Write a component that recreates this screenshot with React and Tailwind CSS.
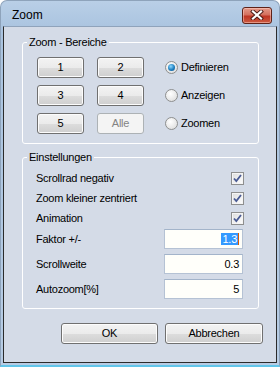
import React from 'react'

const btn = 'flex items-center justify-center h-[21px] rounded-[3px] border border-[#707070] bg-[linear-gradient(to_bottom,#f3f3f3_0%,#ebebeb_50%,#dddddd_51%,#cfcfcf_100%)] shadow-[inset_0_0_0_1px_#fcfcfc] text-black'

function WinButton({ children, w = 'w-[47px]', disabled }) {
  if (disabled) {
    return (
      <div className={`flex items-center justify-center h-[21px] ${w} rounded-[3px] border border-[#adb2b5] bg-[#f4f4f4] text-[#838383]`}>
        {children}
      </div>
    )
  }
  return <div className={`${btn} ${w}`}>{children}</div>
}

function Radio({ checked, label }) {
  return (
    <div className="flex items-center gap-[3px] ml-[8px]">
      <span className="flex items-center justify-center w-[13px] h-[13px] rounded-full border border-[#8e8f8f] bg-[radial-gradient(circle_at_40%_35%,#ffffff,#d8d8d8)]">
        {checked && (
          <span className="w-[7px] h-[7px] rounded-full bg-[radial-gradient(circle_at_40%_35%,#8fd8ff_0%,#1e7fc0_55%,#0e4d86_100%)]" />
        )}
      </span>
      <span>{label}</span>
    </div>
  )
}

function Check() {
  return (
    <span className="flex items-center justify-center w-[13px] h-[13px] border border-[#8e8f8f] bg-[linear-gradient(135deg,#dcdcdc,#ffffff)] shadow-[inset_0_0_0_1px_#f4f4f4]">
      <svg width="9" height="9" viewBox="0 0 9 9">
        <path d="M1 4.5 L3.3 7 L8 1" fill="none" stroke="#4a5b94" strokeWidth="1.8" />
      </svg>
    </span>
  )
}

function Field({ value, selected }) {
  return (
    <div className="flex items-center justify-end w-[79px] h-[20px] mr-[1px] border border-[#b5c2d4] border-t-[#a3b4ca] bg-[#fffffa] pr-[3px]">
      {selected ? (
        <>
          <span className="bg-[#3399ff] text-white px-[1px] leading-[12px]">{value}</span>
          <span className="w-[1px] h-[12px] bg-[#d85a00]" />
        </>
      ) : (
        <span>{value}</span>
      )}
    </div>
  )
}

export default function App() {
  return (
    <div className="w-[280px] h-[367px] flex flex-col rounded-t-[7px] border-t border-x border-[#8ea3bb] border-b-2 border-b-[#62c6ea] bg-[linear-gradient(to_bottom,#b9cfe7,#a9c3df_30px,#b7cce4)] px-[2px] pb-[2px] font-['Liberation_Sans',Arial,sans-serif] text-[11px] tracking-[-0.25px] text-black select-none">
      {/* Title bar */}
      <div className="flex items-center justify-between h-[25px] pt-[3px] pl-[9px] pr-[5px]">
        <span className="text-[12px] tracking-normal">Zoom</span>
        <div className="flex items-center justify-center w-[30px] h-[17px] rounded-[3px] border border-[#5e2218] bg-[linear-gradient(to_bottom,#e49a8a_0%,#d4705e_45%,#bf3524_55%,#cc5a40_100%)] shadow-[inset_0_0_0_1px_rgba(255,210,200,0.5)]">
          <svg width="14" height="10" viewBox="0 0 14 10">
            <path d="M3 1.5 L11 8.5 M11 1.5 L3 8.5" stroke="#4a1a16" strokeWidth="4" strokeLinecap="square" />
            <path d="M3 1.5 L11 8.5 M11 1.5 L3 8.5" stroke="#ffffff" strokeWidth="2.2" strokeLinecap="square" />
          </svg>
        </div>
      </div>

      {/* Client area */}
      <div className="flex-1 flex flex-col border border-[#2b2b2b] border-t-[#8fa3bb] bg-[#d4dbe7]">
        <fieldset className="mt-[9px] ml-[18px] w-[237px] rounded-[3px] border border-white">
          <legend className="ml-[4px] px-[2px] leading-[13px]">Zoom - Bereiche</legend>
          <div className="grid grid-cols-[47px_47px_auto] gap-x-[13px] gap-y-[7px] items-center pl-[14px] pt-[8px] pb-[9px]">
            <WinButton>1</WinButton>
            <WinButton>2</WinButton>
            <Radio checked label="Definieren" />
            <WinButton>3</WinButton>
            <WinButton>4</WinButton>
            <Radio label="Anzeigen" />
            <WinButton>5</WinButton>
            <WinButton disabled>Alle</WinButton>
            <Radio label="Zoomen" />
          </div>
        </fieldset>

        <fieldset className="mt-[7px] ml-[18px] w-[237px] rounded-[3px] border border-white">
          <legend className="ml-[4px] px-[2px] leading-[13px]">Einstellungen</legend>
          <div className="flex flex-col pl-[13px] pr-[14px] pt-[4px] pb-[9px]">
            {['Scrollrad negativ', 'Zoom kleiner zentriert', 'Animation'].map(l => (
              <div key={l} className="flex items-center justify-between h-[20px]">
                <span>{l}</span>
                <Check />
              </div>
            ))}
            <div className="flex flex-col gap-[5px] mt-[1px]">
              {[['Faktor +/-', '1.3', true], ['Scrollweite', '0.3'], ['Autozoom[%]', '5']].map(([l, v, s]) => (
                <div key={l} className="flex items-center justify-between h-[20px]">
                  <span>{l}</span>
                  <Field value={v} selected={s} />
                </div>
              ))}
            </div>
          </div>
        </fieldset>

        <div className="flex gap-[7px] pl-[57px] mt-[14px]">
          <WinButton w="w-[97px]">OK</WinButton>
          <WinButton w="w-[98px]">Abbrechen</WinButton>
        </div>
      </div>
    </div>
  )
}
